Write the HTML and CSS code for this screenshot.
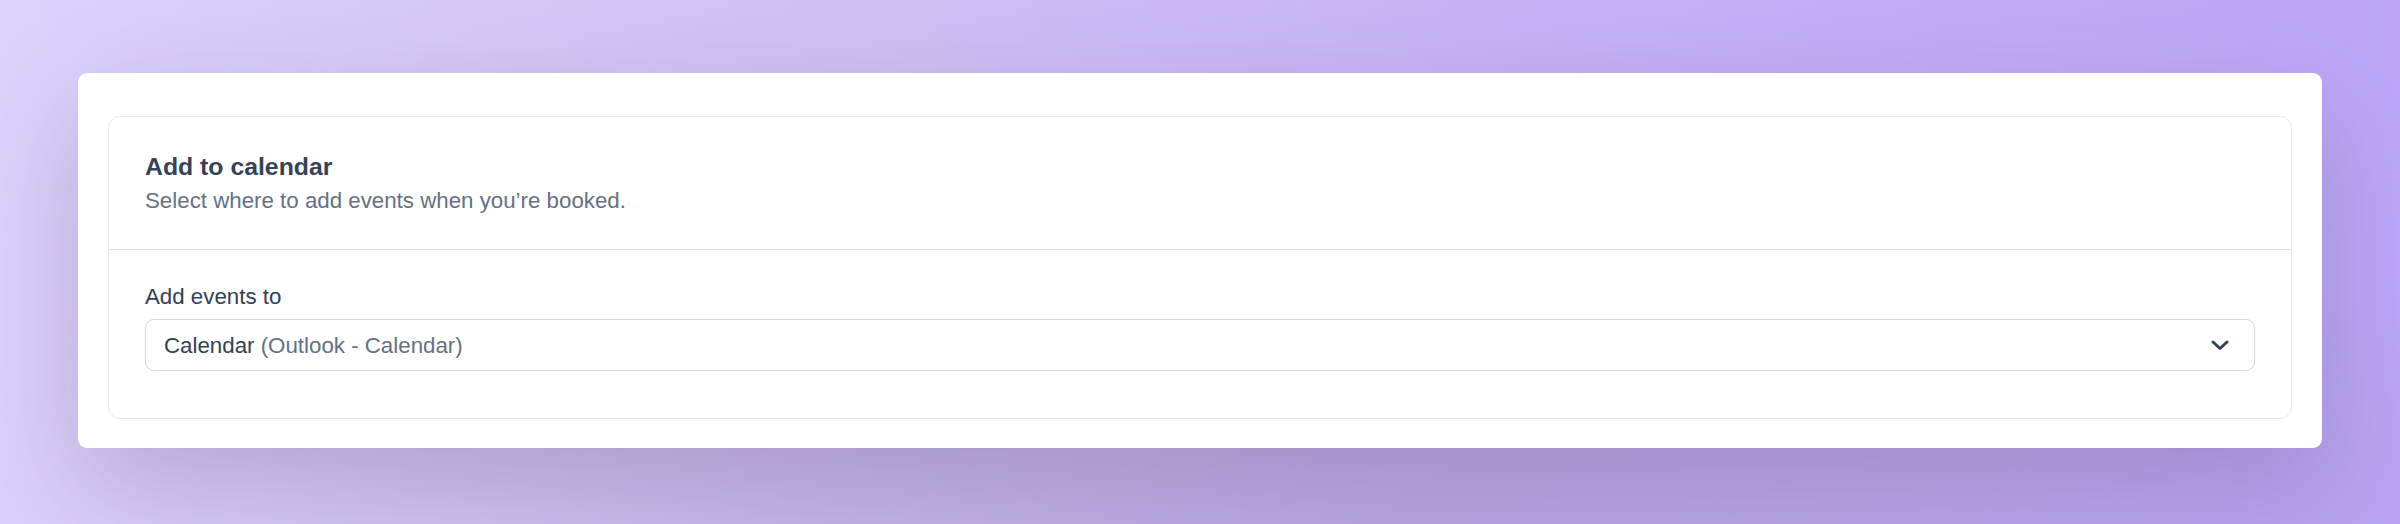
FILE: index.html
```html
<!DOCTYPE html>
<html lang="en">
<head>
<meta charset="utf-8">
<title>Add to calendar</title>
<link rel="stylesheet" href="styles.css">
</head>
<body>
  <main class="card">
    <section class="panel">
      <header class="panel-head">
        <h2 class="panel-title">Add to calendar</h2>
        <p class="panel-sub">Select where to add events when you’re booked.</p>
      </header>
      <div class="panel-body">
        <label class="field-label">Add events to</label>
        <div class="select">
          <span class="select-value">Calendar <span class="select-muted">(Outlook - Calendar)</span></span>
          <svg class="chevron" width="18" height="11" viewBox="0 0 18 11" aria-hidden="true">
            <path d="M2 2 L9 8.5 L16 2" fill="none" stroke="#344054" stroke-width="3" stroke-linecap="round" stroke-linejoin="round"/>
          </svg>
        </div>
      </div>
    </section>
  </main>
</body>
</html>
```

FILE: styles.css
```css
html, body {
  margin: 0;
  height: 524px;
  overflow: hidden;
}

body {
  box-sizing: border-box;
  padding: 73px 78px 0;
  font-family: "Liberation Sans", Arial, sans-serif;
  background:
    radial-gradient(ellipse 55% 60% at 60% 100%, rgba(160, 145, 190, 0.35), rgba(160, 145, 190, 0) 100%),
    linear-gradient(100deg, #ddd3fb 0%, #d1c3f5 30%, #c6b3f6 60%, #bba6f8 100%);
}

.card {
  background: #ffffff;
  border-radius: 9px;
  padding: 42.5px 30px 29.5px;
  box-shadow: 0 40px 110px rgba(80, 65, 105, 0.26);
}

.panel {
  border: 1.5px solid #e7e8ec;
  border-radius: 12px;
}

.panel-head {
  padding: 34px 36px 32px;
  border-bottom: 1.5px solid #dcdfe5;
}

.panel-title {
  margin: 0;
  font-size: 24.8px;
  line-height: 32px;
  font-weight: 600;
  color: #364256;
}

.panel-sub {
  margin: 2px 0 0;
  font-size: 22.3px;
  line-height: 32px;
  color: #667085;
}

.panel-body {
  padding: 31px 36px 47px;
  display: flex;
  flex-direction: column;
}

.field-label {
  font-size: 22.3px;
  line-height: 32px;
  color: #344054;
}

.select {
  margin-top: 6px;
  height: 52px;
  box-sizing: border-box;
  border: 1.5px solid #d5d8de;
  border-radius: 9px;
  padding: 2px 25px 0 18px;
  display: flex;
  align-items: center;
  justify-content: space-between;
}

.select-value {
  font-size: 22.3px;
  line-height: 32px;
  color: #344054;
}

.select-muted {
  color: #667085;
}

.chevron {
  display: block;
}
```
